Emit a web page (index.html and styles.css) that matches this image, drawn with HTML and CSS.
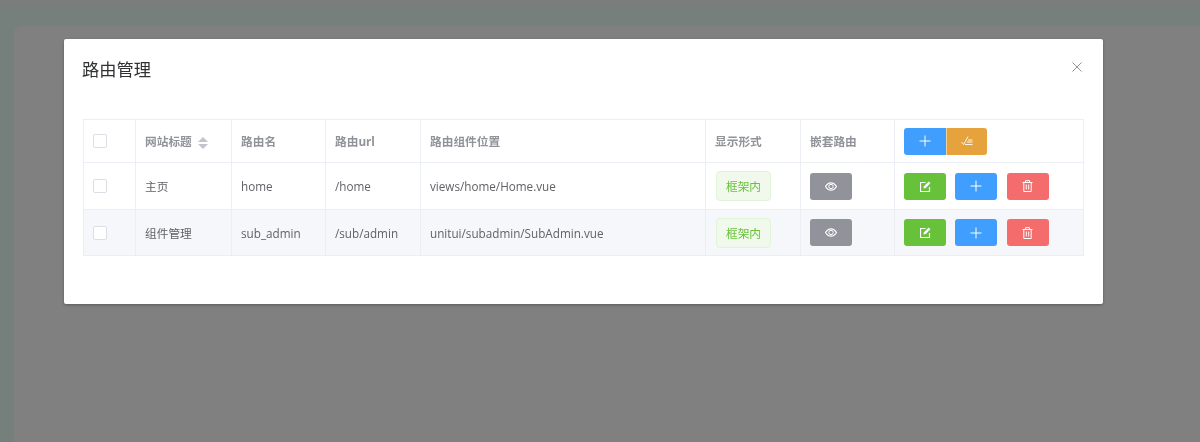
FILE: index.html
```html
<!DOCTYPE html>
<html lang="zh-CN">
<head>
    <meta charset="UTF-8">
    <title>路由管理</title>
    <link rel="stylesheet" href="styles.css">
</head>
<body>

    <!-- Page behind the dialog -->
    <div class="page">
        <div class="page-top"></div>
        <div class="page-body">
            <div class="page-side"></div>
            <div class="page-main"></div>
        </div>
    </div>

    <div class="overlay">
        <div class="dialog">
            <div class="dialog-header">
                <span class="dialog-title">路由管理</span>
                <svg class="dialog-close" width="10" height="10" viewBox="0 0 10 10">
                    <path d="M.5.5l9 9M9.5.5l-9 9" stroke="#909399" fill="none"/>
                </svg>
            </div>
            <div class="dialog-body">
                <table class="route-table">
                    <colgroup>
                        <col class="col-check">
                        <col class="col-title">
                        <col class="col-name">
                        <col class="col-url">
                        <col class="col-path">
                        <col class="col-show">
                        <col class="col-nest">
                        <col class="col-ops">
                    </colgroup>
                    <thead>
                        <tr>
                            <th><span class="checkbox"></span></th>
                            <th>网站标题 <span class="sort"><i class="sort-up"></i><i class="sort-down"></i></span></th>
                            <th>路由名</th>
                            <th>路由url</th>
                            <th>路由组件位置</th>
                            <th>显示形式</th>
                            <th>嵌套路由</th>
                            <th>
                                <div class="btn-group">
                                    <button class="btn btn-blue">
                                        <svg width="12" height="12" viewBox="0 0 12 12"><path d="M6 .5v11M.5 6h11" stroke="#fff" fill="none"/></svg>
                                    </button>
                                    <button class="btn btn-orange">
                                        <svg width="12" height="10" viewBox="0 0 12 10"><path d="M.5 6l2.200 2.500L7 .5M7 4h4.500M6 6h5.500M4 8.500h7.500" stroke="#fff" stroke-width=".9" fill="none"/></svg>
                                    </button>
                                </div>
                            </th>
                        </tr>
                    </thead>
                    <tbody>
                        <tr>
                            <td><span class="checkbox"></span></td>
                            <td>主页</td>
                            <td>home</td>
                            <td>/home</td>
                            <td>views/home/Home.vue</td>
                            <td><span class="tag">框架内</span></td>
                            <td>
                                <button class="btn btn-gray">
                                    <svg width="12" height="9" viewBox="0 0 12 9"><path d="M.5 4.500C2 2 4 .8 6 .8s4 1.200 5.500 3.700C10 7 8 8.200 6 8.200S2 7 .5 4.500z" stroke="#fff" stroke-width="1.200" fill="none"/><circle cx="6" cy="4.500" r="2.200" stroke="#fff" fill="none"/></svg>
                                </button>
                            </td>
                            <td>
                                <div class="btn-row">
                                    <button class="btn btn-green">
                                        <svg width="11" height="11" viewBox="0 0 11 11"><path d="M9.500 6v4.500H.5v-9H5.500" stroke="#fff" stroke-width="1.200" fill="none"/><path d="M3.500 7.500l.5-2.300L8.700.6l1.700 1.700-4.600 4.600z" fill="#fff"/></svg>
                                    </button>
                                    <button class="btn btn-blue">
                                        <svg width="12" height="12" viewBox="0 0 12 12"><path d="M6 .5v11M.5 6h11" stroke="#fff" fill="none"/></svg>
                                    </button>
                                    <button class="btn btn-red">
                                        <svg width="11" height="12" viewBox="0 0 11 12"><path d="M.5 2.500h10M3.500 2.500V.7h4v1.800M1.800 2.500v9h7.400v-9M4.300 4.500v5M6.700 4.500v5" stroke="#fff" fill="none"/></svg>
                                    </button>
                                </div>
                            </td>
                        </tr>
                        <tr class="row-striped">
                            <td><span class="checkbox"></span></td>
                            <td>组件管理</td>
                            <td>sub_admin</td>
                            <td>/sub/admin</td>
                            <td>unitui/subadmin/SubAdmin.vue</td>
                            <td><span class="tag">框架内</span></td>
                            <td>
                                <button class="btn btn-gray">
                                    <svg width="12" height="9" viewBox="0 0 12 9"><path d="M.5 4.500C2 2 4 .8 6 .8s4 1.200 5.500 3.700C10 7 8 8.200 6 8.200S2 7 .5 4.500z" stroke="#fff" stroke-width="1.200" fill="none"/><circle cx="6" cy="4.500" r="2.200" stroke="#fff" fill="none"/></svg>
                                </button>
                            </td>
                            <td>
                                <div class="btn-row">
                                    <button class="btn btn-green">
                                        <svg width="11" height="11" viewBox="0 0 11 11"><path d="M9.500 6v4.500H.5v-9H5.500" stroke="#fff" stroke-width="1.200" fill="none"/><path d="M3.500 7.500l.5-2.300L8.700.6l1.700 1.700-4.600 4.600z" fill="#fff"/></svg>
                                    </button>
                                    <button class="btn btn-blue">
                                        <svg width="12" height="12" viewBox="0 0 12 12"><path d="M6 .5v11M.5 6h11" stroke="#fff" fill="none"/></svg>
                                    </button>
                                    <button class="btn btn-red">
                                        <svg width="11" height="12" viewBox="0 0 11 12"><path d="M.5 2.500h10M3.500 2.500V.7h4v1.800M1.800 2.500v9h7.400v-9M4.300 4.500v5M6.700 4.500v5" stroke="#fff" fill="none"/></svg>
                                    </button>
                                </div>
                            </td>
                        </tr>
                    </tbody>
                </table>
            </div>
        </div>
    </div>

</body>
</html>
```

FILE: styles.css
```css
* {
    box-sizing: border-box;
}
html, body {
    height: 100%;
}
body {
    margin: 0;
    overflow: hidden;
    font-family: "Open Sans", "Noto Sans CJK SC", sans-serif;
    font-size: 11.7px;
    color: #606266;
}
/* Page behind the dialog, already darkened */
.page {
    height: 100%;
    display: flex;
    flex-direction: column;
    background-color: #75807c;
}
.page-top {
    height: 8px;
    background-color: #7a7d7c;
}
.page-body {
    flex: 1;
    display: flex;
    padding-top: 18px;
}
.page-side {
    width: 14px;
}
.page-main {
    flex: 1;
    background-color: #808080;
    border-top-left-radius: 8px;
}
.overlay {
    position: fixed;
    top: 0;
    left: 0;
    right: 0;
    bottom: 0;
    padding: 39px 0 0 64px;
}
.dialog {
    position: relative;
    width: 1039px;
    height: 265px;
    background-color: #fff;
    border-radius: 2px;
    box-shadow: 0 1px 3px rgba(0, 0, 0, 0.3);
}
.dialog-header {
    padding: 19px 18px 10px;
}
.dialog-title {
    font-size: 17.25px;
    line-height: 24px;
    color: #303133;
}
.dialog-close {
    position: absolute;
    top: 23px;
    right: 21px;
}
.dialog-body {
    padding: 27px 19px 0;
}
.route-table {
    width: 1001px;
    table-layout: fixed;
    border-collapse: collapse;
    border: 1px solid #ebeef5;
}
.col-check { width: 52px; }
.col-title { width: 96px; }
.col-name { width: 94px; }
.col-url { width: 95px; }
.col-path { width: 285px; }
.col-show { width: 95px; }
.col-nest { width: 94px; }
.route-table th,
.route-table td {
    padding: 0 9px;
    border: 1px solid #ebeef5;
    text-align: left;
    white-space: nowrap;
    line-height: 16px;
}
.route-table th {
    height: 43px;
    font-weight: 700;
    color: #909399;
}
.route-table td {
    height: 47px;
}
.route-table .row-striped td {
    height: 46px;
    background-color: #f5f7fa;
}
.checkbox {
    display: block;
    width: 14px;
    height: 14px;
    background-color: #fff;
    border: 1px solid #dcdfe6;
    border-radius: 2px;
}
.sort {
    display: inline-flex;
    flex-direction: column;
    gap: 2px;
    margin-left: 3px;
    vertical-align: middle;
}
.sort-up {
    border: 5px solid transparent;
    border-top: 0;
    border-bottom-color: #c0c4cc;
}
.sort-down {
    border: 5px solid transparent;
    border-bottom: 0;
    border-top-color: #c0c4cc;
}
.btn {
    display: flex;
    align-items: center;
    justify-content: center;
    width: 42px;
    height: 27px;
    padding: 0;
    border: none;
    border-radius: 3px;
    cursor: pointer;
}
.btn-group {
    display: flex;
}
.btn-group .btn {
    width: 41.5px;
}
.btn-group .btn:first-child {
    border-radius: 3px 0 0 3px;
}
.btn-group .btn:last-child {
    border-radius: 0 3px 3px 0;
    border-left: 1px solid rgba(255, 255, 255, 0.5);
}
.btn-row {
    display: flex;
    gap: 9.3px;
}
.btn-blue { background-color: #409eff; }
.btn-orange { background-color: #e6a23c; }
.btn-gray { background-color: #909399; }
.btn-green { background-color: #67c23a; }
.btn-red { background-color: #f56c6c; }
.tag {
    display: block;
    width: 55px;
    height: 30px;
    margin-left: 1px;
    line-height: 28px;
    text-align: center;
    color: #67c23a;
    background-color: #f0f9eb;
    border: 1px solid #e1f3d8;
    border-radius: 4px;
}
```
